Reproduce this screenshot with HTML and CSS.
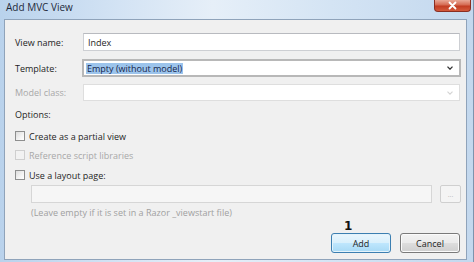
FILE: index.html
```html
<!DOCTYPE html>
<html>
<head>
<meta charset="utf-8">
<link rel="stylesheet" href="styles.css">
</head>
<body>
<div class="window">
  <div class="titlebar">
    <span class="title">Add MVC View</span>
    <div class="close">
      <svg width="11" height="9" viewBox="0 0 11 9"><path d="M2.5 1.5 L8.5 7.5 M8.5 1.5 L2.5 7.5" stroke="#fff" stroke-width="1.8" stroke-linecap="round"/></svg>
    </div>
  </div>
  <div class="client">
    <div class="row r1">
      <span class="label">View name:</span>
      <div class="textbox"><span class="value">Index</span></div>
    </div>
    <div class="row r2">
      <span class="label">Template:</span>
      <div class="select focused">
        <span class="selected">Empty (without model)</span>
        <svg class="chev" width="6" height="4" viewBox="0 0 6 4"><path d="M0.5 0.6 L3 3.2 L5.5 0.6" fill="none" stroke="#333" stroke-width="1.3"/></svg>
      </div>
    </div>
    <div class="row r3">
      <span class="label disabled">Model class:</span>
      <div class="select dim">
        <svg class="chev" width="6" height="4" viewBox="0 0 6 4"><path d="M0.5 0.6 L3 3.2 L5.5 0.6" fill="none" stroke="#d4d4d4" stroke-width="1.1"/></svg>
      </div>
    </div>
    <div class="options">Options:</div>
    <div class="check c1"><span class="box"></span><span>Create as a partial view</span></div>
    <div class="check c2 disabled"><span class="box"></span><span>Reference script libraries</span></div>
    <div class="check c3"><span class="box"></span><span>Use a layout page:</span></div>
    <div class="layout-row">
      <div class="textbox dim grow"></div>
      <div class="browse">...</div>
    </div>
    <div class="hint">(Leave empty if it is set in a Razor _viewstart file)</div>
    <div class="buttons">
      <div class="btn-wrap">
        <span class="badge">1</span>
        <div class="btn primary">Add</div>
      </div>
      <div class="btn">Cancel</div>
    </div>
  </div>
</div>
</body>
</html>
```
FILE: styles.css
```css
* { box-sizing: border-box; }
html, body { margin: 0; padding: 0; }
body {
  width: 474px;
  height: 262px;
  overflow: hidden;
  font-family: "Open Sans", "Noto Sans", sans-serif;
  font-size: 9px;
  color: #1e1e1e;
}
.window {
  width: 474px;
  height: 262px;
  display: flex;
  flex-direction: column;
  background: linear-gradient(to right, #b9d2ec 0%, #d3e3f4 25%, #e6eff8 45%, #d4e4f4 70%, #c3d8ee 100%);
  border-right: 1px solid #7d93ad;
  padding-right: 3px;
}
.titlebar {
  height: 19px;
  display: flex;
  align-items: flex-start;
  justify-content: space-between;
  padding-left: 6px;
  flex: none;
}
.title {
  font-size: 10px;
  line-height: 15px;
  color: #1e2a3a;
}
.close {
  width: 37px;
  height: 12px;
  border: 1px solid #8a2e22;
  border-top: none;
  border-radius: 0 0 4px 4px;
  background: linear-gradient(to bottom, #e9a896 0%, #d56a52 45%, #c23c22 55%, #d35a3c 100%);
  display: flex;
  align-items: center;
  justify-content: center;
  margin-right: -1px;
}
.client {
  margin-left: 4px;
  width: 463px;
  height: 241px;
  border: 1px solid #8fa3ba;
  background: #f0f0f0;
  padding: 13px 6px 0 10px;
  display: flex;
  flex-direction: column;
  flex: none;
}
.row {
  display: flex;
  align-items: center;
  height: 18px;
}
.r2 { margin-top: 8px; }
.r3 { margin-top: 7px; height: 17px; }
.label {
  width: 68px;
  flex: none;
}
.disabled { color: #a8a8a8; }
.textbox {
  flex: 1;
  height: 100%;
  background: #fff;
  border: 1px solid #cdcfd3;
  border-top-color: #b8babf;
  display: flex;
  align-items: center;
  padding-left: 4px;
}
.textbox.dim {
  border-color: #d6d6d6;
  background: #f6f6f6;
}
.select {
  flex: 1;
  height: 100%;
  background: #fff;
  display: flex;
  align-items: center;
  justify-content: space-between;
  padding: 0 6px 0 2px;
  border: 1px solid #d8d8d8;
}
.select.focused {
  border: 2px solid #b8b8b8;
  margin-left: -1px;
  margin-right: -1px;
  padding-left: 2px;
}
.select.dim {
  justify-content: flex-end;
  border-color: #dedede;
}
.selected {
  background: #9cc4ec;
  color: #17254a;
  padding: 0 1px;
  line-height: 11px;
}
.options {
  margin-top: 7px;
  height: 14px;
  line-height: 14px;
}
.check {
  display: flex;
  align-items: center;
  height: 14px;
  gap: 4px;
}
.c1 { margin-top: 7px; }
.c2 { margin-top: 5px; }
.c3 { margin-top: 6px; }
.box {
  width: 10px;
  height: 10px;
  border: 1px solid #8e8f8f;
  background: linear-gradient(135deg, #dcdcdc 0%, #f4f4f4 60%, #ffffff 100%);
  flex: none;
}
.check.disabled .box {
  border-color: #cfcfcf;
  background: #f2f2f2;
}
.layout-row {
  display: flex;
  margin-top: 3px;
  margin-left: 16px;
  height: 18px;
  gap: 8px;
}
.grow { flex: 1; }
.browse {
  width: 21px;
  height: 18px;
  border: 1px solid #cfcfcf;
  border-radius: 2px;
  background: #f4f4f4;
  color: #b8b8b8;
  font-size: 7px;
  display: flex;
  align-items: center;
  justify-content: center;
  margin-right: -1px;
}
.hint {
  margin-top: 3px;
  margin-left: 16px;
  height: 14px;
  line-height: 14px;
  color: #a0a0a0;
}
.buttons {
  margin-top: 13px;
  display: flex;
  justify-content: flex-end;
  gap: 9px;
}
.btn-wrap {
  position: relative;
}
.badge {
  position: absolute;
  left: 13px;
  top: -13px;
  font-family: "DejaVu Sans", sans-serif;
  font-weight: bold;
  font-size: 12px;
  line-height: 13px;
  color: #111;
}
.btn {
  width: 60px;
  height: 20px;
  border: 1px solid #7a7a7a;
  border-radius: 3px;
  background: linear-gradient(to bottom, #f3f3f3 0%, #ebebeb 48%, #dddddd 52%, #cfcfcf 100%);
  box-shadow: inset 0 0 0 1px #fbfbfb;
  display: flex;
  align-items: center;
  justify-content: center;
  color: #1e1e1e;
}
.btn.primary {
  border-color: #3c7fb1;
  background: linear-gradient(to bottom, #eaf6fd 0%, #d9f0fc 48%, #bee6fd 52%, #a7d9f5 100%);
  box-shadow: inset 0 0 0 1px #e4f3fb;
}
```
